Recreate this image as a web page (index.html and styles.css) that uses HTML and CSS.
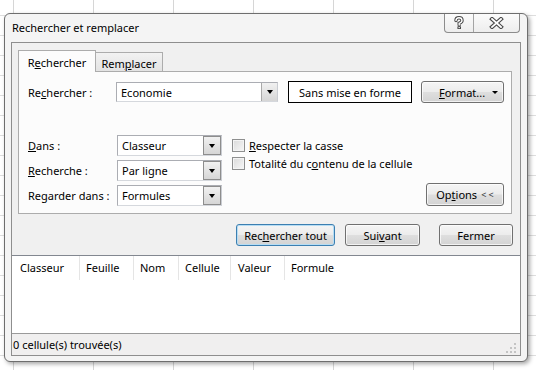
FILE: index.html
```html
<!DOCTYPE html>
<html lang="fr">
<head>
<meta charset="utf-8">
<title>Rechercher et remplacer</title>
<link rel="stylesheet" href="styles.css">
</head>
<body>
<div class="dialog">
  <div class="titlebar">
    <div class="title">Rechercher et remplacer</div>
    <div class="caption-buttons">
      <div class="cap cap-help">
        <svg width="12" height="14" viewBox="0 0 12 14">
          <path d="M3 4.5 Q3 1.8 6 1.8 Q9 1.8 9 4.5 Q9 6.3 6.2 7.3 L6.2 9" fill="none" stroke="#4a4a4a" stroke-width="3.4" stroke-linecap="round"/>
          <rect x="4.4" y="10.2" width="3.6" height="2.8" rx="0.6" fill="#4a4a4a"/>
          <path d="M3 4.5 Q3 1.8 6 1.8 Q9 1.8 9 4.5 Q9 6.3 6.2 7.3 L6.2 9" fill="none" stroke="#fff" stroke-width="1.4" stroke-linecap="round"/>
          <rect x="5.5" y="11.1" width="1.4" height="1" fill="#fff"/>
        </svg>
      </div>
      <div class="cap cap-close">
        <svg width="15" height="12" viewBox="0 0 15 12">
          <path d="M3 2 L12 10 M12 2 L3 10" fill="none" stroke="#4a4a4a" stroke-width="4" stroke-linecap="square"/>
          <path d="M3 2 L12 10 M12 2 L3 10" fill="none" stroke="#fff" stroke-width="1.8" stroke-linecap="square"/>
        </svg>
      </div>
    </div>
  </div>

  <div class="client">
    <div class="tabs">
      <div class="tab tab-active">R<u>e</u>chercher</div>
      <div class="tab tab-inactive">Rem<u>p</u>lacer</div>
    </div>

    <div class="panel">
      <div class="row1">
        <div class="lbl">Re<u>c</u>hercher :</div>
        <div class="combo combo-find">
          <span class="val">Economie</span>
          <span class="arrow"><span class="tri"></span></span>
        </div>
        <div class="fmt-box">Sans mise en forme</div>
        <div class="btn btn-format"><span><u>F</u>ormat...</span><span class="tri tri-small"></span></div>
      </div>

      <div class="lower">
        <div class="fields">
          <div class="field">
            <div class="lbl lbl-wide"><u>D</u>ans :</div>
            <div class="combo combo-sel"><span class="val">Classeur</span><span class="arrow arrow-sel"><span class="tri"></span></span></div>
          </div>
          <div class="field">
            <div class="lbl lbl-wide"><u>R</u>echerche :</div>
            <div class="combo combo-sel"><span class="val">Par ligne</span><span class="arrow arrow-sel"><span class="tri"></span></span></div>
          </div>
          <div class="field">
            <div class="lbl lbl-wide">Re<u>g</u>arder dans :</div>
            <div class="combo combo-sel"><span class="val">Formules</span><span class="arrow arrow-sel"><span class="tri"></span></span></div>
          </div>
        </div>

        <div class="checks">
          <div class="check"><span class="box"></span><span><u>R</u>especter la casse</span></div>
          <div class="check"><span class="box"></span><span>Totalité du c<u>o</u>ntenu de la cellule</span></div>
        </div>

        <div class="btn btn-options">Op<u>t</u>ions <span class="lt">&lt; &lt;</span></div>
      </div>
    </div>

    <div class="actions">
      <div class="btn btn-default btn-all">Rec<u>h</u>ercher tout</div>
      <div class="btn btn-next">Sui<u>v</u>ant</div>
      <div class="btn btn-close">Fermer</div>
    </div>

    <div class="list">
      <div class="list-head">
        <div class="col col-classeur">Classeur</div>
        <div class="col col-feuille">Feuille</div>
        <div class="col col-nom">Nom</div>
        <div class="col col-cellule">Cellule</div>
        <div class="col col-valeur">Valeur</div>
        <div class="col col-formule">Formule</div>
      </div>
    </div>

    <div class="status">
      <span class="status-text">0 cellule(s) trouvée(s)</span>
      <svg class="grip" width="11" height="11" viewBox="0 0 11 11">
        <g fill="#c4c4c4">
          <rect x="8" y="0" width="2" height="2"/>
          <rect x="4" y="4" width="2" height="2"/><rect x="8" y="4" width="2" height="2"/>
          <rect x="0" y="8" width="2" height="2"/><rect x="4" y="8" width="2" height="2"/><rect x="8" y="8" width="2" height="2"/>
        </g>
      </svg>
    </div>
  </div>
</div>
</body>
</html>
```

FILE: styles.css
```css
html, body {
  margin: 0;
  padding: 0;
}

body {
  width: 536px;
  height: 370px;
  overflow: hidden;
  font-family: "Noto Sans", "Open Sans", sans-serif;
  font-size: 11px;
  color: #000;
  background-color: #fff;
  background-image:
    linear-gradient(to right, #d6d6d6 1px, transparent 1px),
    linear-gradient(to bottom, #dedede 1px, transparent 1px);
  background-size: 80px 100%, 100% 20px;
  background-position: 13px 0, 0 15px;
}

u {
  text-decoration: underline;
  text-underline-offset: 1px;
}

.dialog {
  box-sizing: border-box;
  width: 524px;
  height: 349px;
  margin: 13px 0 0 4px;
  border: 1px solid #6e6e6e;
  border-radius: 6px;
  background: #f4f4f4;
  box-shadow: 2px 2px 4px rgba(0, 0, 0, 0.35);
  display: flex;
  flex-direction: column;
}

.titlebar {
  height: 28px;
  flex: none;
  display: flex;
  align-items: flex-start;
}

.title {
  padding-left: 7px;
  line-height: 28px;
  white-space: nowrap;
}

.caption-buttons {
  margin-left: auto;
  margin-right: 7px;
  display: flex;
  height: 18px;
  border: 1px solid #8c8c8c;
  border-top: none;
  border-radius: 0 0 4px 4px;
  background: linear-gradient(#fbfbfb, #ededed);
  overflow: hidden;
}

.cap {
  display: flex;
  align-items: center;
  justify-content: center;
}

.cap-help {
  width: 28px;
  border-right: 1px solid #a4a4a4;
}

.cap-close {
  width: 45px;
}

.client {
  flex: 1;
  margin: 0 6px 5px;
  border: 1px solid #8e8e8e;
  background: #f0f0f0;
  display: flex;
  flex-direction: column;
  min-height: 0;
}

/* Tabs */
.tabs {
  display: flex;
  align-items: flex-end;
  height: 21px;
  margin: 7px 0 0 6px;
  position: relative;
  z-index: 1;
  flex: none;
}

.tab {
  box-sizing: border-box;
  display: flex;
  align-items: center;
  justify-content: center;
  border: 1px solid #acacac;
  border-bottom: none;
  white-space: nowrap;
}

.tab-active {
  width: 78px;
  height: 22px;
  margin-bottom: -1px;
  background: #fcfcfc;
  padding-top: 1px;
}

.tab-inactive {
  width: 68px;
  height: 19px;
  margin-left: -1px;
  background: linear-gradient(#f2f2f2, #e3e3e3);
  padding-top: 2px;
}

/* Panel */
.panel {
  flex: none;
  margin: 0 8px 0 6px;
  border: 1px solid #acacac;
  background: #fcfcfc;
  padding: 9px 7px 7px 9px;
}

.row1 {
  display: flex;
  align-items: center;
  height: 22px;
}

.lbl {
  width: 88px;
  flex: none;
  white-space: nowrap;
}

.lbl-wide {
  width: 89px;
}

.combo {
  box-sizing: border-box;
  display: flex;
  border: 1px solid #abadb3;
  border-right-color: #c9ccd2;
  border-bottom-color: #d5d8dd;
  background: #fff;
  flex: none;
}

.combo .val {
  flex: 1;
  padding-left: 4px;
  white-space: nowrap;
  display: flex;
  align-items: center;
}

.combo-find {
  width: 162px;
  height: 20px;
}

.combo-sel {
  width: 105px;
  height: 21px;
}

.arrow {
  width: 15px;
  display: flex;
  align-items: center;
  justify-content: center;
  border-left: 1px solid #a9a9a9;
  background: linear-gradient(#f1f1f1, #d6d6d6);
}

.arrow-sel {
  width: 16px;
  border: 1px solid #8d8d8d;
  margin: 0;
}

.tri {
  width: 0;
  height: 0;
  border-left: 3.5px solid transparent;
  border-right: 3.5px solid transparent;
  border-top: 4px solid #000;
}

.tri-small {
  border-left-width: 3px;
  border-right-width: 3px;
  border-top-width: 3px;
  margin-left: auto;
}

.fmt-box {
  box-sizing: border-box;
  margin-left: 10px;
  width: 124px;
  height: 22px;
  border: 1px solid #000;
  background: #fff;
  display: flex;
  align-items: center;
  justify-content: center;
  white-space: nowrap;
  flex: none;
}

/* Buttons */
.btn {
  box-sizing: border-box;
  border: 1px solid #707070;
  border-radius: 3px;
  background: linear-gradient(#f5f5f5 0%, #ececec 48%, #dedede 52%, #d3d3d3 100%);
  box-shadow: inset 0 0 0 1px rgba(255, 255, 255, 0.7);
  display: flex;
  align-items: center;
  justify-content: center;
  white-space: nowrap;
  flex: none;
}

.btn-format {
  margin-left: 9px;
  width: 83px;
  height: 22px;
  justify-content: flex-start;
  padding: 0 5px 0 17px;
}

.lower {
  display: flex;
  margin-top: 32px;
}

.fields {
  display: flex;
  flex-direction: column;
  gap: 4px;
}

.field {
  display: flex;
  align-items: center;
  height: 21px;
}

.checks {
  margin-left: 10px;
  margin-top: 1px;
}

.check {
  display: flex;
  align-items: center;
  gap: 4px;
  height: 18px;
  white-space: nowrap;
}

.box {
  box-sizing: border-box;
  width: 13px;
  height: 13px;
  border: 1px solid #8e8f8f;
  background: linear-gradient(135deg, #dadada, #f7f7f7);
  box-shadow: inset 0 0 0 1px #f4f4f4;
  flex: none;
}

.btn-options {
  margin-left: auto;
  align-self: flex-end;
  width: 78px;
  height: 23px;
}

.lt {
  font-size: 9px;
  margin-left: 4px;
  color: #333;
}

.actions {
  flex: none;
  display: flex;
  justify-content: flex-end;
  height: 22px;
  margin-top: 10px;
  padding-right: 7px;
}

.btn-default {
  border-color: #3c7fb1;
  box-shadow: inset 0 0 0 1px #b6ddf4;
}

.btn-all {
  width: 99px;
}

.btn-next {
  width: 75px;
  margin-left: 10px;
}

.btn-close {
  width: 74px;
  margin-left: 19px;
}

/* Results list */
.list {
  flex: 1;
  margin-top: 9px;
  background: #fff;
  border-top: 1px solid #828790;
  min-height: 0;
}

.list-head {
  display: flex;
  height: 24px;
}

.col {
  box-sizing: border-box;
  border-right: 1px solid #e5e5e5;
  padding-left: 6px;
  line-height: 24px;
  white-space: nowrap;
  flex: none;
}

.col-classeur { width: 68px; padding-left: 8px; }
.col-feuille { width: 54px; }
.col-nom { width: 45px; }
.col-cellule { width: 52px; }
.col-valeur { width: 54px; padding-left: 7px; }
.col-formule { flex: 1; border-right: none; }

.status {
  flex: none;
  height: 22px;
  box-sizing: border-box;
  border-top: 1px solid #9a9a9a;
  background: #f0efef;
  display: flex;
  align-items: center;
  padding-left: 1px;
}

.grip {
  margin-left: auto;
  margin-right: 3px;
  align-self: flex-end;
  margin-bottom: 1px;
}
```
